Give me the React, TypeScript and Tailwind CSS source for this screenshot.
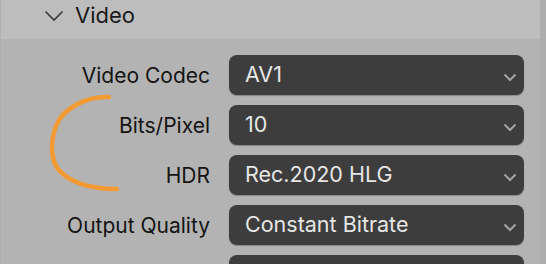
import { ChevronDown } from "lucide-react";

const rows = [
  { label: "Video Codec", value: "AV1" },
  { label: "Bits/Pixel", value: "10" },
  { label: "HDR", value: "Rec.2020 HLG" },
  { label: "Output Quality", value: "Constant Bitrate" },
  { label: "", value: "" },
];

function Dropdown({ value }: { value: string }) {
  return (
    <div className="flex h-[40px] w-[295px] shrink-0 items-center justify-between rounded-[8px] bg-[#3d3d3d] pl-[16px] pr-[7px] shadow-[0_1px_1px_rgba(0,0,0,0.25)]">
      <span className="text-[21.5px] leading-none text-[#e6e6e6]">{value}</span>
      <svg width="14" height="9" viewBox="0 0 14 9" className="mt-[4px]">
        <path d="M1.5 1.5 L7 7 L12.5 1.5" fill="none" stroke="#a3a3a3" strokeWidth="2" />
      </svg>
    </div>
  );
}

export default function App() {
  return (
    <div
      className="relative flex h-[264px] w-[546px] overflow-hidden bg-[#b3b3b3]"
      style={{ fontFamily: "Inter, 'Noto Sans', sans-serif" }}
    >
      <div className="flex flex-1 flex-col border-l border-[#aeaeae]">
        {/* Panel header */}
        <div className="flex h-[39px] shrink-0 items-center bg-[#bdbdbd] pb-[9px]">
          <svg width="20" height="12" viewBox="0 0 20 12" className="ml-[43px] mt-[2px]">
            <path d="M1.5 1.5 L10 10 L18.5 1.5" fill="none" stroke="#3a3a3a" strokeWidth="1.6" />
          </svg>
          <span className="ml-[11px] text-[22px] leading-none text-[#1a1a1a]">Video</span>
        </div>

        {/* Properties */}
        <div className="flex flex-col gap-[10px] pt-[16px]">
          {rows.map((row, i) => (
            <div key={i} className="flex items-center">
              <div className="w-[209px] shrink-0 text-right text-[21px] leading-none text-[#141414]">
                {row.label}
              </div>
              <div className="ml-[19px]">
                <Dropdown value={row.value} />
              </div>
            </div>
          ))}
        </div>
      </div>
      <div className="w-[6px] shrink-0 bg-[#adadad]" />

      {/* hand-drawn annotation */}
      <svg className="pointer-events-none absolute left-0 top-0" width="546" height="264">
        <path
          d="M109 97 C 90 96 64 106 56 126 C 50 142 51 160 58 169 C 70 183 92 189 117 189"
          fill="none"
          stroke="#f39a33"
          strokeWidth="4.5"
          strokeLinecap="round"
        />
      </svg>
    </div>
  );
}
